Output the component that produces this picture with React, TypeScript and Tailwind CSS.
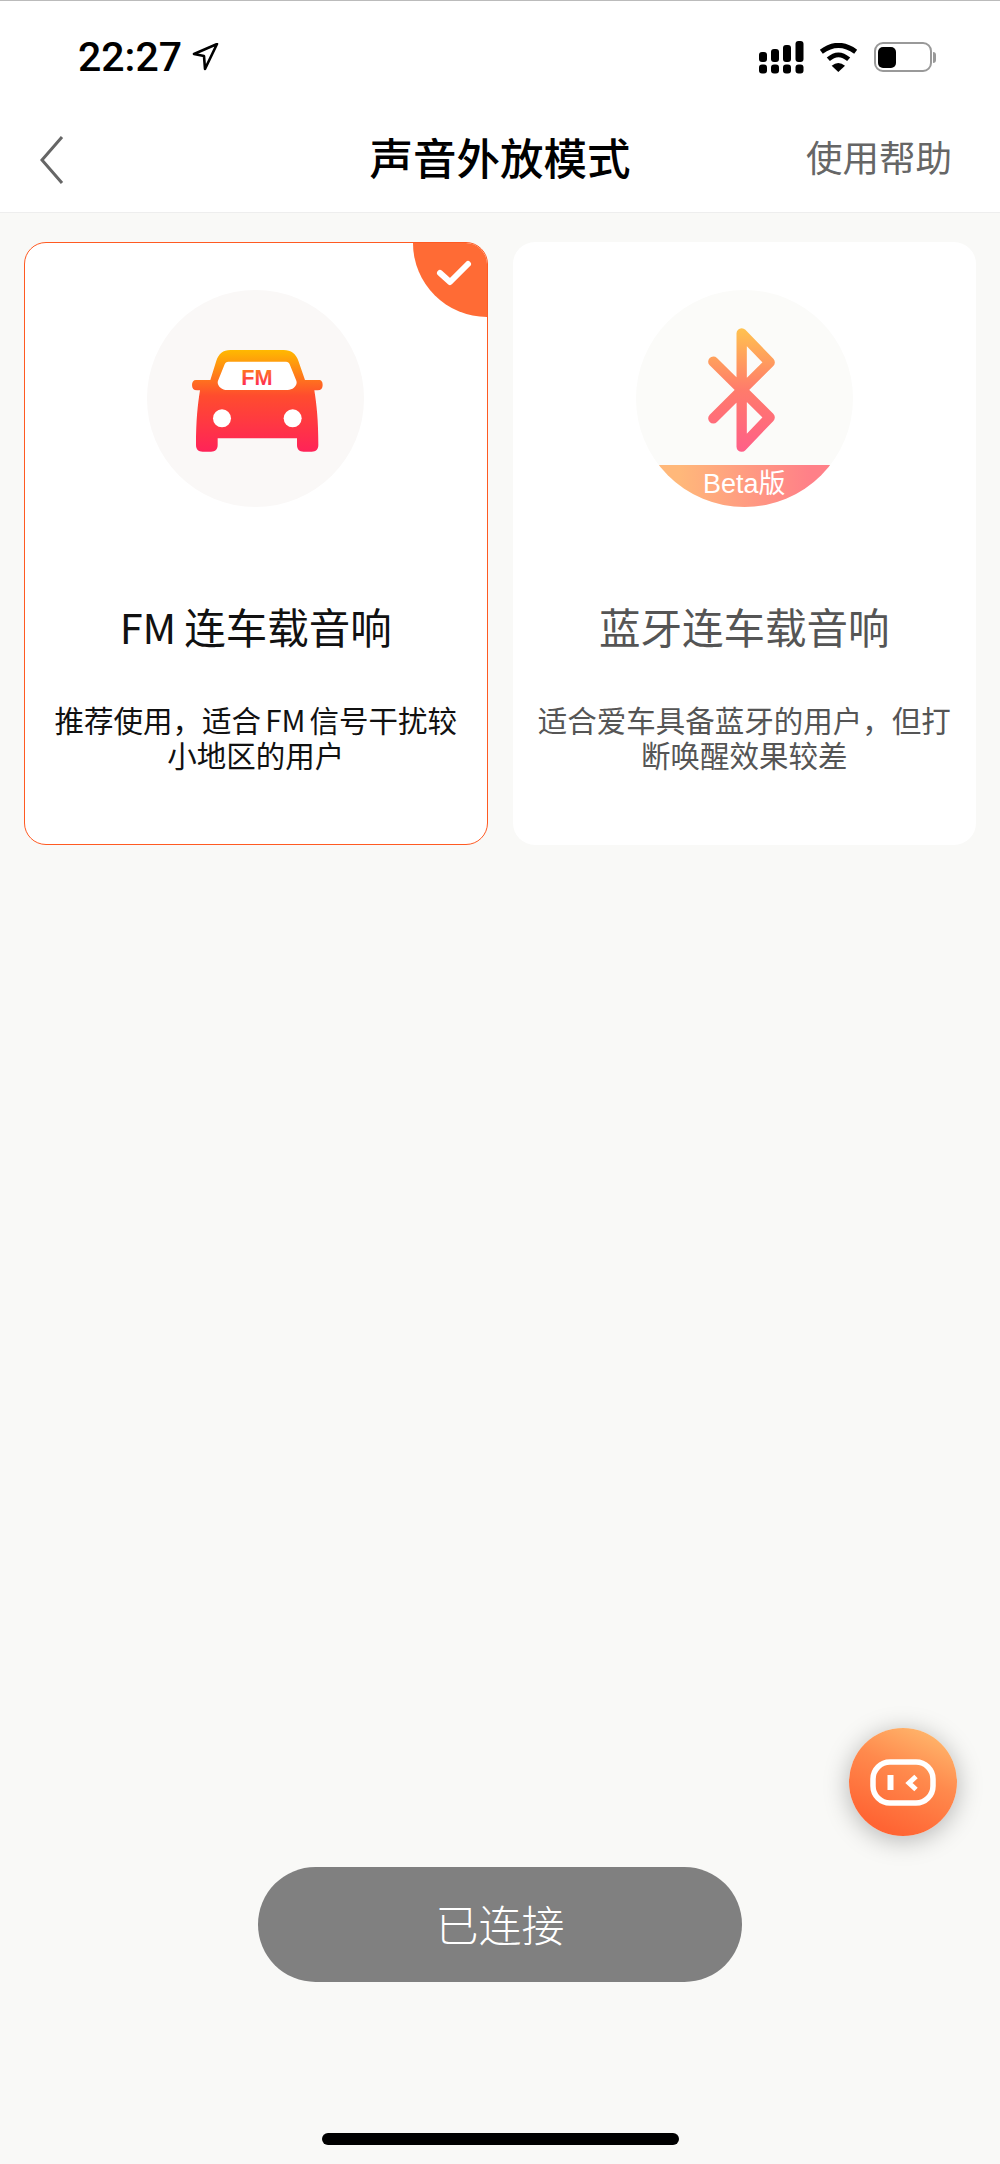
const cjk = "font-['Noto_Sans_CJK_SC','Noto_Sans',sans-serif]";

const StatusIcons = () => {
  return (
    <div className="flex items-center">
      <svg width="46" height="33" viewBox="0 0 46 33">
        <rect x="0" y="11" width="8" height="10" rx="3" fill="#000" />
        <rect x="12" y="8" width="8" height="13" rx="3" fill="#000" />
        <rect x="24" y="4" width="8" height="17" rx="3" fill="#000" />
        <rect x="36.5" y="0" width="8" height="21" rx="3" fill="#000" />
        <rect x="0" y="23.5" width="8" height="9" rx="3" fill="#000" />
        <rect x="12" y="23.5" width="8" height="9" rx="3" fill="#000" />
        <rect x="24" y="23.5" width="8" height="9" rx="3" fill="#000" />
        <rect x="36.5" y="23.5" width="8" height="9" rx="3" fill="#000" />
      </svg>
      <svg className="ml-[14px]" width="39" height="29" viewBox="0 0 117 87">
        <path d="M7 26 Q58 -12 110 26" fill="none" stroke="#000" strokeWidth="15" />
        <path d="M28 49 Q58 22 89 49" fill="none" stroke="#000" strokeWidth="14" />
        <path d="M38 68 Q58 52 78 68 L58 87 Z" fill="#000" />
      </svg>
      <div className="ml-[16px] flex items-center">
        <div className="flex h-[30px] w-[58px] items-center rounded-[9px] border-2 border-[#999] pl-[2px]">
          <div className="h-[21px] w-[18px] rounded-[5px] bg-black" />
        </div>
        <div className="ml-[1px] h-[11px] w-[3px] rounded-r-full bg-[#999]" />
      </div>
    </div>
  );
};

const CarIcon = () => {
  return (
    <svg className="mb-[7px]" width="170" height="130" viewBox="0 0 510 390">
      <defs>
        <linearGradient id="carFill" gradientUnits="userSpaceOnUse" x1="0" y1="60" x2="0" y2="365">
          <stop offset="0" stopColor="#ffb900" />
          <stop offset="0.45" stopColor="#ff4c2e" />
          <stop offset="1" stopColor="#ff2358" />
        </linearGradient>
        <linearGradient id="fmFill" gradientUnits="userSpaceOnUse" x1="0" y1="118" x2="0" y2="166">
          <stop offset="0" stopColor="#ff7a1e" />
          <stop offset="1" stopColor="#ff2a55" />
        </linearGradient>
      </defs>
      <path
        fill="url(#carFill)"
        d="M178 60 H338 C360 60 375 72 382 92 L402 150 H443 C452 150 455 156 455 165 C455 175 450 181 440 181 H430 C437 225 442 270 442 345 C442 358 435 365 422 365 H398 C385 365 378 358 378 345 V325 H140 V345 C140 358 133 365 120 365 H95 C82 365 75 358 75 345 C75 270 80 225 87 181 H78 C68 181 63 175 63 165 C63 156 67 150 75 150 H118 L136 92 C143 72 156 60 178 60 Z"
      />
      <path
        fill="#fff"
        d="M172 95 H345 C351 95 354 98 356 103 L376 152 C381 166 366 180 350 180 H168 C152 180 136 166 141 152 L161 103 C163 98 166 95 172 95 Z"
      />
      <circle cx="153" cy="265" r="27" fill="#fff" />
      <circle cx="365" cy="265" r="27" fill="#fff" />
      <text x="258" y="165" textAnchor="middle" fontSize="65" fontWeight="700" fontFamily="Liberation Sans" fill="url(#fmFill)">
        FM
      </text>
    </svg>
  );
};

const BluetoothIcon = () => {
  return (
    <svg className="mt-[20px]" width="170" height="155" viewBox="0 0 510 465">
      <defs>
        <linearGradient id="btStroke" gradientUnits="userSpaceOnUse" x1="0" y1="55" x2="0" y2="425">
          <stop offset="0" stopColor="#ffc24f" />
          <stop offset="0.5" stopColor="#ff7b6b" />
          <stop offset="1" stopColor="#ff5f88" />
        </linearGradient>
      </defs>
      <path
        d="M163 155 L332 322 L248 410 V70 L332 157 L163 325"
        fill="none"
        stroke="url(#btStroke)"
        strokeWidth="31"
        strokeLinecap="round"
        strokeLinejoin="round"
      />
    </svg>
  );
};

const Card = ({
  active,
  title,
  desc,
  icon,
  beta,
}: {
  active?: boolean;
  title: React.ReactNode;
  desc: React.ReactNode;
  icon: React.ReactNode;
  beta?: boolean;
}) => {
  return (
    <div
      className={`relative flex h-[603px] flex-col items-center overflow-hidden rounded-[22px] border bg-white ${
        active ? "border-[#ff5a22] text-[#111]" : "border-transparent text-[#555]"
      }`}
    >
      {active && (
        <div className="absolute right-0 top-0 h-[74px] w-[74px] rounded-bl-[74px] bg-[#ff6b35]">
          <svg width="74" height="74" viewBox="0 0 74 74">
            <path d="M27 30 L37 39 L55 21" fill="none" stroke="#fff" strokeWidth="6" strokeLinecap="round" strokeLinejoin="round" />
          </svg>
        </div>
      )}
      <div
        className={`relative mt-[47px] flex h-[217px] w-[217px] shrink-0 justify-center overflow-hidden rounded-full ${
          active ? "items-center bg-[#faf8f7]" : "bg-[#fbfbf9]"
        }`}
      >
        {icon}
        {beta && (
          <div className="absolute bottom-0 left-0 flex h-[42px] w-full items-center justify-center bg-[linear-gradient(90deg,#ffb87a_20%,#ff8088_80%)] pb-[3px] font-['Liberation_Sans','Noto_Sans_CJK_SC',sans-serif] text-[27px] leading-none text-white">
            Beta版
          </div>
        )}
      </div>
      <div className={`mt-[91px] text-[41.5px] leading-[56px] ${cjk}`}>{title}</div>
      <div className={`mt-[48px] w-[420px] text-center text-[29.5px] leading-[35px] ${cjk}`}>{desc}</div>
    </div>
  );
};

export default function App() {
  return (
    <div className="relative flex h-screen w-full flex-col bg-[#f9f9f7]">
      <div className="flex h-[213px] shrink-0 flex-col border-y-[1px] border-t-[#bbb] border-b-[#eee] bg-white">
        <div className="flex h-[112px] items-center justify-between pl-[78px] pr-[64px]">
          <div className="flex items-center">
            <span className="font-['Roboto',sans-serif] text-[41px] font-medium leading-none text-black">22:27</span>
            <svg className="ml-[9px]" width="28" height="28" viewBox="0 0 28 28">
              <path d="M26 1 L3 11 L13 13 L14 26 Z" fill="none" stroke="#000" strokeWidth="2.6" strokeLinejoin="round" />
            </svg>
          </div>
          <StatusIcons />
        </div>
        <div className="grid flex-1 grid-cols-[1fr_auto_1fr] items-center px-[40px] pb-[6px]">
          <svg width="24" height="48" viewBox="0 0 24 48">
            <path d="M22 1 L2 24 L22 47" fill="none" stroke="#666" strokeWidth="3" />
          </svg>
          <div className={`mb-[5px] text-[43.5px] font-medium leading-[60px] text-black ${cjk}`}>声音外放模式</div>
          <div className={`mb-[5px] mr-[8px] justify-self-end text-[36.5px] leading-[50px] text-[#666] ${cjk}`}>使用帮助</div>
        </div>
      </div>

      <div className="grid grid-cols-2 gap-[25px] px-[24px] pt-[29px]">
        <Card
          active
          title={
            <>
              <span className="mr-[8px]">FM</span>连车载音响
            </>
          }
          desc={
            <>
              <div>
                推荐使用，适合<span className="mx-[4px]">FM</span>信号干扰较
              </div>
              <div>小地区的用户</div>
            </>
          }
          icon={<CarIcon />}
        />
        <Card beta title="蓝牙连车载音响" desc="适合爱车具备蓝牙的用户，但打断唤醒效果较差" icon={<BluetoothIcon />} />
      </div>

      <div className="mt-auto flex flex-col items-center">
        <button className={`h-[115px] w-[484px] rounded-full bg-[#808080] pb-[3px] text-[43px] font-light text-white ${cjk}`}>已连接</button>
        <div className="mb-[19px] mt-[151px] h-[12px] w-[357px] rounded-full bg-black" />
      </div>

      <div className="absolute bottom-[328px] right-[43px] flex h-[108px] w-[108px] items-center justify-center rounded-full bg-[linear-gradient(205deg,#ffc274_0%,#ff8a4d_42%,#ff6433_85%)] shadow-[0_4px_26px_rgba(0,0,0,0.28)]">
        <svg width="66" height="47" viewBox="0 0 66 47">
          <rect x="3" y="3" width="60" height="41" rx="17" fill="none" stroke="#fff" strokeWidth="5.5" />
          <rect x="17.5" y="16" width="6" height="15" fill="#fff" />
          <path d="M46 17.5 L39 24 L46 30.5" fill="none" stroke="#fff" strokeWidth="5" />
        </svg>
      </div>
    </div>
  );
}
